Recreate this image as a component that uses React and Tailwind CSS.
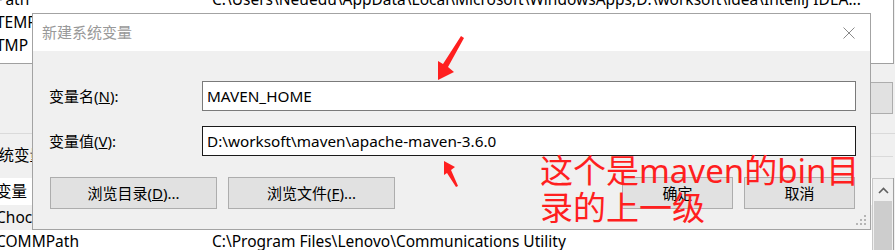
const topRows = [
  ['Path', 'C:\\Users\\Neuedu\\AppData\\Local\\Microsoft\\WindowsApps;D:\\worksoft\\idea\\IntelliJ IDEA...'],
  ['TEMP', '%USERPROFILE%\\AppData\\Local\\Temp'],
  ['TMP', '%USERPROFILE%\\AppData\\Local\\Temp'],
]

const listRows = [
  ['变量', '值', 'h-[27px] bg-white'],
  ['ChocolateyInstall', 'C:\\ProgramData\\chocolatey', 'h-[25px] bg-[#f0f0f0]'],
  ['COMMPath', 'C:\\Program Files\\Lenovo\\Communications Utility', 'h-[24px] bg-white'],
]

function Row({ name, value, className }) {
  return (
    <div className={`flex items-center whitespace-nowrap ${className}`}>
      <span className="w-[216px] -ml-[4px] shrink-0">{name}</span>
      <span>{value}</span>
    </div>
  )
}

function Btn({ children, className }) {
  return (
    <div className={`h-[32px] flex items-center justify-center bg-[#e1e1e1] border border-[#adadad] ${className}`}>
      {children}
    </div>
  )
}

function Grip() {
  const dots = [[8, 0], [4, 4], [8, 4], [0, 8], [4, 8], [8, 8]]
  return (
    <svg className="absolute right-[4px] bottom-[4px]" width="10" height="10" viewBox="0 0 10 10">
      {dots.map(([x, y]) => (
        <rect key={`${x}-${y}`} x={x} y={y} width="2" height="2" fill="#b5b5b5" />
      ))}
    </svg>
  )
}

export default function App() {
  return (
    <div className="relative w-[895px] h-[250px] overflow-hidden bg-[#f0f0f0] text-[15.5px] text-black font-['Noto_Sans','Noto_Sans_CJK_SC',sans-serif]">
      {/* window behind: variables list */}
      <div className="w-[894px] h-[64px] bg-white border-r border-b border-[#a0a0a0] overflow-hidden">
        <div className="-mt-[12px]">
          {topRows.map(([n, v]) => (
            <Row key={n} name={n} value={v} className="h-[23px]" />
          ))}
        </div>
      </div>
      <div className="h-[69px] flex justify-end pt-[18px] pr-[2px]">
        <Btn className="w-[110px]">编辑(E)...</Btn>
      </div>
      <div className="h-[45px] flex items-center border-t border-[#dadada]">
        <span className="-ml-[17px] whitespace-nowrap">系统变量(S)</span>
        <div className="flex-1" />
        <div className="w-[25px] mr-[2px] border-t border-[#dadada]" />
      </div>
      <div className="w-[894px] flex border-r border-[#a0a0a0]">
        <div className="flex-1 bg-white">
          {listRows.map(([n, v, c]) => (
            <Row key={n} name={n} value={v} className={c} />
          ))}
        </div>
        <div className="w-[21px] h-[76px] border-l border-t border-[#c8c8c8] bg-[#f0f0f0] flex flex-col items-center">
          <svg className="mt-[8px]" width="11" height="7" viewBox="0 0 11 7">
            <path d="M1 6 L5.5 1.5 L10 6" fill="none" stroke="#606060" strokeWidth="1.6" />
          </svg>
          <div className="mt-[7px] w-[18px] flex-1 bg-[#cdcdcd]" />
        </div>
      </div>

      {/* dialog */}
      <div className="absolute left-[32px] top-[13px] w-[839px] h-[217px] border border-[#a3a3a3] bg-[#f0f0f0] flex flex-col text-[15px]">
        <div className="h-[37px] bg-white flex items-center justify-between pl-[9px] pr-[15px]">
          <span className="text-[#999999]">新建系统变量</span>
          <svg width="12" height="12" viewBox="0 0 12 12">
            <path d="M0.5 0.5 L11.5 11.5 M11.5 0.5 L0.5 11.5" stroke="#8a8a8a" strokeWidth="1" />
          </svg>
        </div>
        <div className="relative flex-1 pt-[30px] pl-[16px] pr-[14px]">
          <div className="h-[30px] flex items-center">
            <span className="w-[153px] shrink-0">变量名(<u>N</u>):</span>
            <div className="flex-1 h-full flex items-center bg-white border border-[#7a7a7a] pl-[4px] text-[15.3px]">MAVEN_HOME</div>
          </div>
          <div className="mt-[15px] h-[30px] flex items-center">
            <span className="w-[153px] shrink-0">变量值(<u>V</u>):</span>
            <div className="flex-1 h-full flex items-center bg-white border border-[#1a1a1a] pl-[4px] text-[15.3px]">D:\worksoft\maven\apache-maven-3.6.0</div>
          </div>
          <div className="mt-[21px] flex gap-[11px] pl-[1px] pr-[1px]">
            <Btn className="w-[167px]">浏览目录(<u>D</u>)...</Btn>
            <Btn className="w-[167px]">浏览文件(<u>F</u>)...</Btn>
            <div className="flex-1" />
            <Btn className="w-[111px]">确定</Btn>
            <Btn className="w-[111px]">取消</Btn>
          </div>
          <Grip />
        </div>
      </div>

      {/* red annotations */}
      <svg className="absolute left-0 top-0 pointer-events-none" width="895" height="250" viewBox="0 0 895 250">
        <polygon points="461,36 464,38 448,67 454,72 438,80 438,61 443,64" fill="#ff1f1f" />
        <polygon points="444,161 455,167 451,170 458,186 456,187 447,173 444,175" fill="#ff1f1f" />
      </svg>
      <div className="absolute left-[540px] top-[152px] text-[33px] leading-[37px] text-[#ff1f1f] whitespace-nowrap">
        <div>这个是maven的bin目</div>
        <div>录的上一级</div>
      </div>
    </div>
  )
}
